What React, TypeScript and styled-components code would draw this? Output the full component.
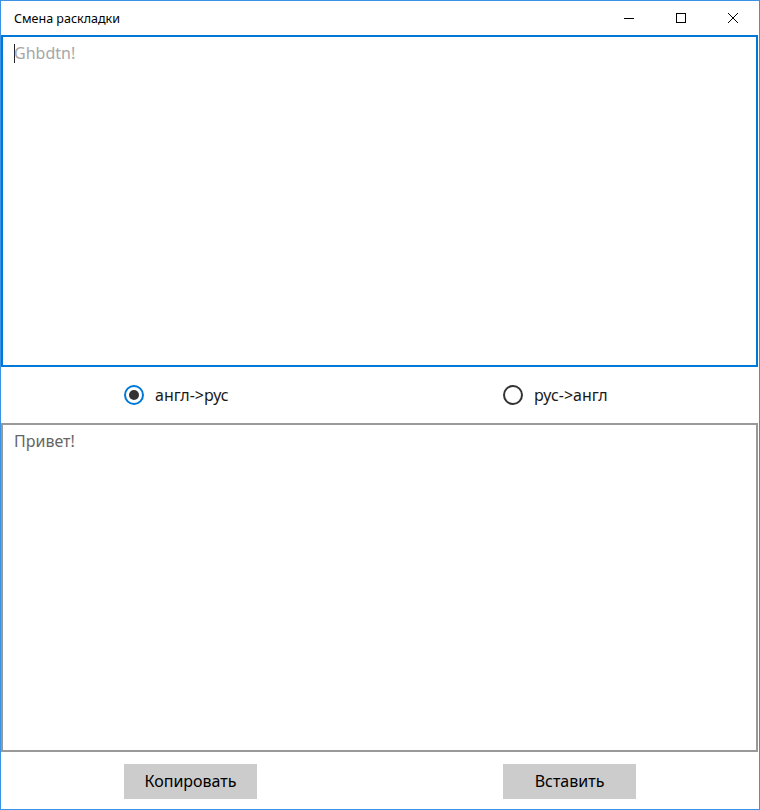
import { useState } from 'react';
import styled, { createGlobalStyle } from 'styled-components';

const GlobalStyle = createGlobalStyle`
  html, body {
    margin: 0;
    padding: 0;
    background: #ffffff;
  }
  * {
    box-sizing: border-box;
  }
`;

const Window = styled.div`
  width: 760px;
  height: 810px;
  border: 1px solid #3a93e4;
  display: flex;
  flex-direction: column;
  font-family: 'Noto Sans', 'Open Sans', sans-serif;
  color: #1a1a1a;
  background: #fff;
`;

const TitleBar = styled.div`
  height: 34px;
  display: flex;
  align-items: center;
  flex-shrink: 0;
`;

const Title = styled.div`
  flex: 1;
  padding-left: 13px;
  font-size: 12.5px;
  color: #000;
`;

const ControlButton = styled.div`
  width: 52px;
  height: 34px;
  display: flex;
  align-items: center;
  justify-content: center;
`;

const TextBox = styled.div<{ $active?: boolean }>`
  height: ${(p) => (p.$active ? 332 : 329)}px;
  margin-right: 1px;
  flex-shrink: 0;
  border: 2px solid ${(p) => (p.$active ? '#0078d7' : '#999999')};
  padding: 6px 11px;
  font-size: 16px;
  line-height: 20px;
`;

const Caret = styled.span`
  display: inline-block;
  width: 1px;
  height: 19px;
  background: #222;
  vertical-align: -4px;
  margin-right: -1px;
`;

const Placeholder = styled.span`
  color: #a6a6a6;
`;

const OutputText = styled.span`
  color: #666;
`;

const Row = styled.div<{ $height: number }>`
  height: ${(p) => p.$height}px;
  flex-shrink: 0;
  display: grid;
  grid-template-columns: 379px 1fr;
  align-items: center;
  justify-items: center;
`;

const Cell = styled.div`
  width: 133px;
  display: flex;
`;

const RadioLabel = styled.label`
  display: flex;
  align-items: center;
  gap: 11px;
  font-size: 16px;
  color: #1a1a1a;
  cursor: pointer;
  white-space: nowrap;
`;

const RadioCircle = styled.span<{ $checked: boolean }>`
  width: 20px;
  height: 20px;
  border-radius: 50%;
  border: 2px solid ${(p) => (p.$checked ? '#0078d7' : '#333333')};
  display: flex;
  align-items: center;
  justify-content: center;

  &::after {
    content: '';
    width: 10px;
    height: 10px;
    border-radius: 50%;
    background: #333;
    display: ${(p) => (p.$checked ? 'block' : 'none')};
  }
`;

const Button = styled.button`
  width: 133px;
  height: 35px;
  margin-top: 1px;
  border: none;
  background: #cccccc;
  font-family: 'Noto Sans', 'Open Sans', sans-serif;
  font-size: 16px;
  color: #000;
  padding: 0;
`;

export default function App() {
  const [mode, setMode] = useState<'en-ru' | 'ru-en'>('en-ru');

  return (
    <>
      <GlobalStyle />
      <Window>
        <TitleBar>
          <Title>Смена раскладки</Title>
          <ControlButton>
            <svg width='10' height='10' viewBox='0 0 10 10'>
              <path d='M0 5.5h10' stroke='#000' strokeWidth='1' />
            </svg>
          </ControlButton>
          <ControlButton>
            <svg width='10' height='10' viewBox='0 0 10 10'>
              <rect x='0.5' y='0.5' width='9' height='9' fill='none' stroke='#000' strokeWidth='1' />
            </svg>
          </ControlButton>
          <ControlButton>
            <svg width='10' height='10' viewBox='0 0 10 10'>
              <path d='M0 0L10 10M10 0L0 10' stroke='#000' strokeWidth='1' />
            </svg>
          </ControlButton>
        </TitleBar>

        <TextBox $active>
          <Caret />
          <Placeholder>Ghbdtn!</Placeholder>
        </TextBox>

        <Row $height={56}>
          <Cell>
            <RadioLabel onClick={() => setMode('en-ru')}>
              <RadioCircle $checked={mode === 'en-ru'} />
              англ-&gt;рус
            </RadioLabel>
          </Cell>
          <Cell>
            <RadioLabel onClick={() => setMode('ru-en')}>
              <RadioCircle $checked={mode === 'ru-en'} />
              рус-&gt;англ
            </RadioLabel>
          </Cell>
        </Row>

        <TextBox>
          <OutputText>Привет!</OutputText>
        </TextBox>

        <Row $height={57}>
          <Cell>
            <Button>Копировать</Button>
          </Cell>
          <Cell>
            <Button>Вставить</Button>
          </Cell>
        </Row>
      </Window>
    </>
  );
}
